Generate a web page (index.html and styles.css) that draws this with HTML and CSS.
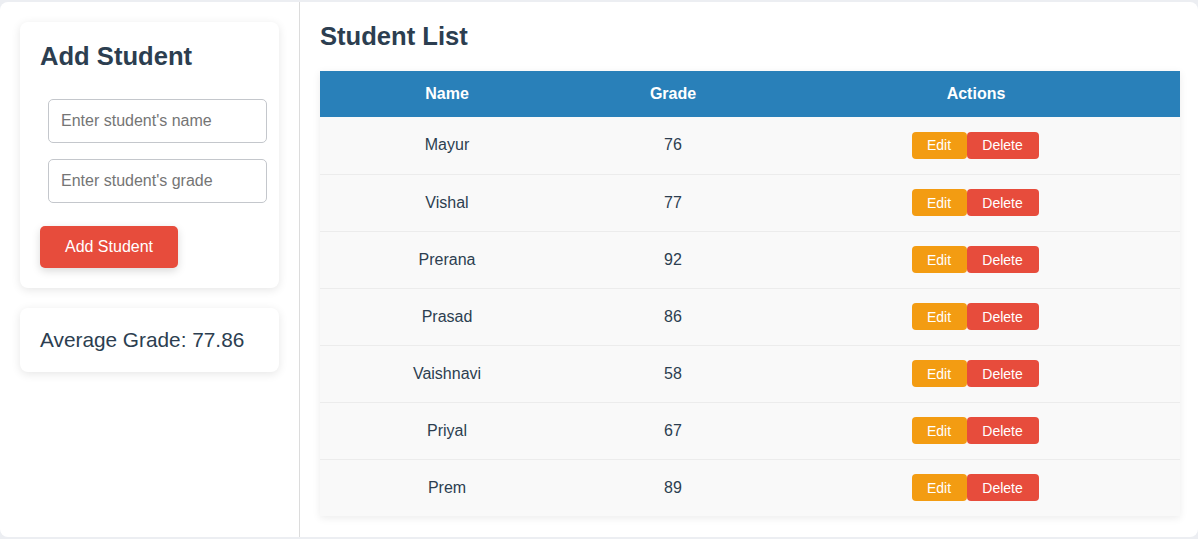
FILE: index.html
```html
<!DOCTYPE html>
<html lang="en">
<head>
<meta charset="utf-8">
<title>Student Grades</title>
<link rel="stylesheet" href="styles.css">
</head>
<body>
<div class="app">
  <aside class="sidebar">
    <div class="card add-card">
      <h2 class="card-title">Add Student</h2>
      <div class="fields">
        <input class="field" type="text" placeholder="Enter student's name">
        <input class="field" type="text" placeholder="Enter student's grade">
      </div>
      <button class="btn-add">Add Student</button>
    </div>
    <div class="card avg-card">Average Grade: 77.86</div>
  </aside>
  <main class="main">
    <h2 class="main-title">Student List</h2>
    <table class="table">
      <thead>
        <tr><th class="c-name">Name</th><th class="c-grade">Grade</th><th class="c-actions">Actions</th></tr>
      </thead>
      <tbody>
        <tr><td>Mayur</td><td>76</td><td><div class="acts"><button class="btn-edit">Edit</button><button class="btn-del">Delete</button></div></td></tr>
        <tr><td>Vishal</td><td>77</td><td><div class="acts"><button class="btn-edit">Edit</button><button class="btn-del">Delete</button></div></td></tr>
        <tr><td>Prerana</td><td>92</td><td><div class="acts"><button class="btn-edit">Edit</button><button class="btn-del">Delete</button></div></td></tr>
        <tr><td>Prasad</td><td>86</td><td><div class="acts"><button class="btn-edit">Edit</button><button class="btn-del">Delete</button></div></td></tr>
        <tr><td>Vaishnavi</td><td>58</td><td><div class="acts"><button class="btn-edit">Edit</button><button class="btn-del">Delete</button></div></td></tr>
        <tr><td>Priyal</td><td>67</td><td><div class="acts"><button class="btn-edit">Edit</button><button class="btn-del">Delete</button></div></td></tr>
        <tr><td>Prem</td><td>89</td><td><div class="acts"><button class="btn-edit">Edit</button><button class="btn-del">Delete</button></div></td></tr>
      </tbody>
    </table>
  </main>
</div>
</body>
</html>
```

FILE: styles.css
```css
* { box-sizing: border-box; }
html, body { margin: 0; padding: 0; }
body {
  background: #eceef2;
  font-family: "Liberation Sans", Arial, sans-serif;
  color: #2c3e50;
  overflow: hidden;
}
.app {
  margin-top: 2px;
  height: 535px;
  background: #fff;
  border-radius: 8px;
  display: flex;
}
.sidebar {
  width: 300px;
  flex: none;
  border-right: 1px solid #dcdcdc;
  padding: 20px 20px;
  display: flex;
  flex-direction: column;
  gap: 20px;
}
.card {
  background: #fff;
  border-radius: 8px;
  box-shadow: 0 2px 10px rgba(0,0,0,0.1);
  width: 259px;
}
.add-card {
  padding: 20px 20px 20px 20px;
}
.card-title {
  margin: 0;
  font-size: 25.6px;
  font-weight: bold;
  line-height: 28px;
  color: #2c3e50;
}
.fields {
  margin-top: 29px;
  padding-left: 8px;
  display: flex;
  flex-direction: column;
  gap: 16px;
}
.field {
  width: 219px;
  height: 44px;
  padding: 0 12px;
  border: 1px solid #c4c7cc;
  border-radius: 5px;
  font-family: "Liberation Sans", Arial, sans-serif;
  font-size: 16px;
  color: #333;
  outline: none;
}
.field::placeholder { color: #757575; }
.btn-add {
  margin-top: 23px;
  width: 138px;
  height: 42px;
  border: none;
  border-radius: 5px;
  background: #e74c3c;
  color: #fff;
  font-family: "Liberation Sans", Arial, sans-serif;
  font-size: 16px;
  box-shadow: 0 3px 8px rgba(0,0,0,0.15);
  display: block;
}
.avg-card {
  height: 64px;
  padding: 0 20px;
  display: flex;
  align-items: center;
  font-size: 20.8px;
  color: #2c3e50;
}
.main {
  flex: 1;
  padding: 18px 18px 20px 20px;
}
.main-title {
  margin: 0;
  font-size: 25.6px;
  font-weight: bold;
  line-height: 32px;
  color: #2c3e50;
}
.table {
  margin-top: 19px;
  width: 860px;
  border-collapse: collapse;
  box-shadow: 0 2px 8px rgba(0,0,0,0.08);
}
.table th {
  background: #2980b9;
  color: #fff;
  font-size: 16px;
  font-weight: bold;
  height: 46px;
  padding: 0;
  text-align: center;
}
.c-name { width: 254px; }
.c-grade { width: 198px; }
.c-actions { width: 408px; }
.table td {
  background: #f9f9f9;
  height: 57px;
  padding: 0;
  text-align: center;
  font-size: 16px;
  color: #2c3e50;
  border-bottom: 1px solid #ececec;
}
.table tbody tr:last-child td { border-bottom: none; }
.acts {
  display: flex;
  justify-content: center;
  padding-right: 2px;
}
.btn-edit, .btn-del {
  height: 27px;
  border: none;
  border-radius: 4px;
  color: #fff;
  font-family: "Liberation Sans", Arial, sans-serif;
  font-size: 14px;
  padding: 0;
}
.btn-edit { background: #f39c12; width: 55px; }
.btn-del { background: #e74c3c; width: 72px; }
```
